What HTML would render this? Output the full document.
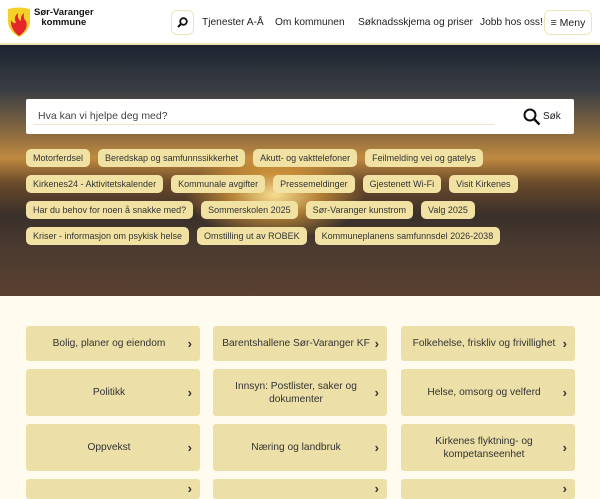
<!DOCTYPE html>
<html><head><meta charset="utf-8"><style>
*{margin:0;padding:0;box-sizing:border-box}
body{width:600px;height:480px;overflow:hidden;font-family:"Liberation Sans",sans-serif;background:#fffcef;position:relative}
.hdr{position:absolute;top:0;left:0;width:600px;height:45px;background:#fff;border-bottom:2px solid #efe4b8}
.logo{position:absolute;left:34px;top:8px;font-weight:bold;font-size:9.5px;line-height:10px;color:#111;text-align:center}
.nav{position:absolute;top:0;height:44px;display:flex;align-items:center;font-size:10.2px;color:#222;white-space:nowrap}
.btn{position:absolute;top:10px;height:25px;border:1px solid #efe4b8;border-radius:6px;display:flex;align-items:center;justify-content:center;font-size:10.5px;color:#222}
.hero{position:absolute;top:45px;left:0;width:600px;height:251px;
background:
radial-gradient(ellipse 90px 45px at 275px 150px,rgba(255,230,150,.95),rgba(240,170,60,.6) 50%,rgba(200,120,40,0) 100%),
linear-gradient(180deg,#1d2430 0%,#3a3d44 18%,#8a6a40 35%,#c08a40 45%,#6a4a2a 55%,#3a2f2a 68%,#4a3a30 80%,#5a4030 100%);}
.search{position:absolute;left:26px;top:99px;width:548px;height:35px;background:#fff;border-radius:2px}
.search .ph{position:absolute;left:12px;top:11px;font-size:10.5px;color:#444}
.search .ln{position:absolute;left:8px;right:80px;bottom:9px;height:1px;background:#f0e6c8}
.chips{position:absolute;left:26px;top:149px;width:560px}
.row{display:flex;gap:8px;margin-bottom:8px;height:18px}
.chip{background:#f1e2a4;border-radius:5px;font-size:9px;color:#333;padding:0 7px;display:flex;align-items:center;white-space:nowrap}
.card{position:absolute;width:174px;background:#ece0a8;border-radius:3px;display:flex;align-items:center;justify-content:center;text-align:center;font-size:10.2px;color:#333;line-height:13px;padding:0 14px 0 6px}
.card:after{content:"›";position:absolute;right:8px;top:50%;transform:translateY(-55%);font-size:13px;font-weight:bold;color:#333}
</style></head><body>
<div class="hdr">
<svg style="position:absolute;left:7px;top:7px" width="24" height="30" viewBox="0 0 24 30"><path d="M1 2 Q12 -1 23 2 L23 14 Q23 24 12 30 Q1 24 1 14Z" fill="#f5d02a"/><path d="M12 29 Q3 22 4 13 Q6 17 9 16 Q6 10 11 6 Q10 12 14 14 Q13 9 17 6 Q16 12 19 14 Q22 22 12 29Z" fill="#e4262a"/></svg>
<div class="logo">Sør-Varanger<br>kommune</div>
<div class="btn" style="left:171px;width:23px"><svg width="11" height="11" viewBox="0 0 11 11"><circle cx="6.5" cy="4.5" r="3.3" fill="none" stroke="#111" stroke-width="1.8"/><path d="M4 7 L1 10" stroke="#111" stroke-width="2"/></svg></div>
<div class="nav" style="left:202px">Tjenester A-Å</div>
<div class="nav" style="left:275px">Om kommunen</div>
<div class="nav" style="left:358px">Søknadsskjema og priser</div>
<div class="nav" style="left:480px">Jobb hos oss!</div>
<div class="btn" style="left:544px;width:48px">≡ Meny</div>
</div>
<div class="hero"></div>
<div class="search"><div class="ph">Hva kan vi hjelpe deg med?</div><div class="ln"></div>
<svg style="position:absolute;left:497px;top:9px" width="18" height="18" viewBox="0 0 18 18"><circle cx="7" cy="7" r="5.5" fill="none" stroke="#111" stroke-width="2"/><path d="M11 11 L16.5 16.5" stroke="#111" stroke-width="2.4"/></svg>
<div style="position:absolute;left:517px;top:12px;font-size:10px;color:#222">Søk</div></div>
<div class="chips">
<div class="row"><span class="chip">Motorferdsel</span><span class="chip">Beredskap og samfunnssikkerhet</span><span class="chip">Akutt- og vakttelefoner</span><span class="chip">Feilmelding vei og gatelys</span></div>
<div class="row"><span class="chip">Kirkenes24 - Aktivitetskalender</span><span class="chip">Kommunale avgifter</span><span class="chip">Pressemeldinger</span><span class="chip">Gjestenett Wi-Fi</span><span class="chip">Visit Kirkenes</span></div>
<div class="row"><span class="chip">Har du behov for noen å snakke med?</span><span class="chip">Sommerskolen 2025</span><span class="chip">Sør-Varanger kunstrom</span><span class="chip">Valg 2025</span></div>
<div class="row"><span class="chip">Kriser - informasjon om psykisk helse</span><span class="chip">Omstilling ut av ROBEK</span><span class="chip">Kommuneplanens samfunnsdel 2026-2038</span></div>
</div>
<div class="card" style="left:26px;top:326px;height:35px">Bolig, planer og eiendom</div>
<div class="card" style="left:213px;top:326px;height:35px">Barentshallene Sør-Varanger KF</div>
<div class="card" style="left:401px;top:326px;height:35px">Folkehelse, friskliv og frivillighet</div>
<div class="card" style="left:26px;top:369px;height:47px">Politikk</div>
<div class="card" style="left:213px;top:369px;height:47px">Innsyn: Postlister, saker og dokumenter</div>
<div class="card" style="left:401px;top:369px;height:47px">Helse, omsorg og velferd</div>
<div class="card" style="left:26px;top:424px;height:47px">Oppvekst</div>
<div class="card" style="left:213px;top:424px;height:47px">Næring og landbruk</div>
<div class="card" style="left:401px;top:424px;height:47px">Kirkenes flyktning- og kompetanseenhet</div>
<div class="card" style="left:26px;top:479px;height:20px"></div>
<div class="card" style="left:213px;top:479px;height:20px"></div>
<div class="card" style="left:401px;top:479px;height:20px"></div>
</body></html>
